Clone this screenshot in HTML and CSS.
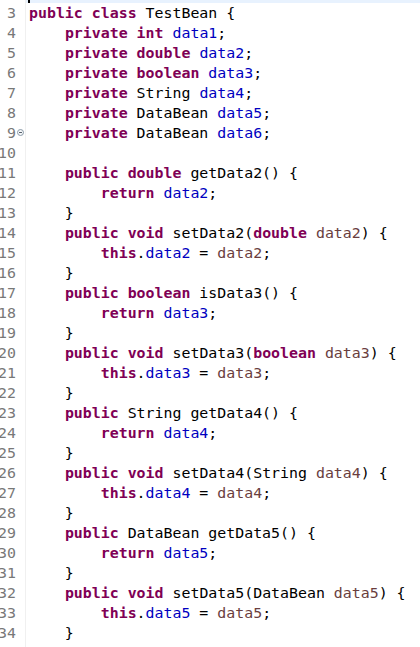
FILE: index.html
```html
<!DOCTYPE html>
<html>
<head>
<meta charset="utf-8">
<link rel="stylesheet" href="styles.css">
</head>
<body>
<div class="editor">
  <div class="line current"><span class="ln">2</span><span class="code"><span class="caret"></span></span></div>
  <div class="line"><span class="ln">3</span><span class="code"><b class="k">public</b> <b class="k">class</b> TestBean {</span></div>
  <div class="line"><span class="ln">4</span><span class="code">    <b class="k">private</b> <b class="k">int</b> <span class="f">data1</span>;</span></div>
  <div class="line"><span class="ln">5</span><span class="code">    <b class="k">private</b> <b class="k">double</b> <span class="f">data2</span>;</span></div>
  <div class="line"><span class="ln">6</span><span class="code">    <b class="k">private</b> <b class="k">boolean</b> <span class="f">data3</span>;</span></div>
  <div class="line"><span class="ln">7</span><span class="code">    <b class="k">private</b> String <span class="f">data4</span>;</span></div>
  <div class="line"><span class="ln">8</span><span class="code">    <b class="k">private</b> DataBean <span class="f">data5</span>;</span></div>
  <div class="line"><span class="ln">9<span class="fold"></span></span><span class="code">    <b class="k">private</b> DataBean <span class="f">data6</span>;</span></div>
  <div class="line"><span class="ln">10</span><span class="code"></span></div>
  <div class="line"><span class="ln">11</span><span class="code">    <b class="k">public</b> <b class="k">double</b> getData2() {</span></div>
  <div class="line"><span class="ln">12</span><span class="code">        <b class="k">return</b> <span class="f">data2</span>;</span></div>
  <div class="line"><span class="ln">13</span><span class="code">    }</span></div>
  <div class="line"><span class="ln">14</span><span class="code">    <b class="k">public</b> <b class="k">void</b> setData2(<b class="k">double</b> <span class="p">data2</span>) {</span></div>
  <div class="line"><span class="ln">15</span><span class="code">        <b class="k">this</b>.<span class="f">data2</span> = <span class="p">data2</span>;</span></div>
  <div class="line"><span class="ln">16</span><span class="code">    }</span></div>
  <div class="line"><span class="ln">17</span><span class="code">    <b class="k">public</b> <b class="k">boolean</b> isData3() {</span></div>
  <div class="line"><span class="ln">18</span><span class="code">        <b class="k">return</b> <span class="f">data3</span>;</span></div>
  <div class="line"><span class="ln">19</span><span class="code">    }</span></div>
  <div class="line"><span class="ln">20</span><span class="code">    <b class="k">public</b> <b class="k">void</b> setData3(<b class="k">boolean</b> <span class="p">data3</span>) {</span></div>
  <div class="line"><span class="ln">21</span><span class="code">        <b class="k">this</b>.<span class="f">data3</span> = <span class="p">data3</span>;</span></div>
  <div class="line"><span class="ln">22</span><span class="code">    }</span></div>
  <div class="line"><span class="ln">23</span><span class="code">    <b class="k">public</b> String getData4() {</span></div>
  <div class="line"><span class="ln">24</span><span class="code">        <b class="k">return</b> <span class="f">data4</span>;</span></div>
  <div class="line"><span class="ln">25</span><span class="code">    }</span></div>
  <div class="line"><span class="ln">26</span><span class="code">    <b class="k">public</b> <b class="k">void</b> setData4(String <span class="p">data4</span>) {</span></div>
  <div class="line"><span class="ln">27</span><span class="code">        <b class="k">this</b>.<span class="f">data4</span> = <span class="p">data4</span>;</span></div>
  <div class="line"><span class="ln">28</span><span class="code">    }</span></div>
  <div class="line"><span class="ln">29</span><span class="code">    <b class="k">public</b> DataBean getData5() {</span></div>
  <div class="line"><span class="ln">30</span><span class="code">        <b class="k">return</b> <span class="f">data5</span>;</span></div>
  <div class="line"><span class="ln">31</span><span class="code">    }</span></div>
  <div class="line"><span class="ln">32</span><span class="code">    <b class="k">public</b> <b class="k">void</b> setData5(DataBean <span class="p">data5</span>) {</span></div>
  <div class="line"><span class="ln">33</span><span class="code">        <b class="k">this</b>.<span class="f">data5</span> = <span class="p">data5</span>;</span></div>
  <div class="line"><span class="ln">34</span><span class="code">    }</span></div>
  <div class="line"><span class="ln">35</span><span class="code"></span></div>
</div>
</body>
</html>
```
FILE: styles.css
```css
html, body {
  margin: 0;
  padding: 0;
  background: #ffffff;
  overflow: hidden;
}
.editor {
  margin-top: -17px;
  font-family: "DejaVu Sans Mono", "Liberation Mono", monospace;
  font-size: 14.9px;
  line-height: 20px;
  color: #000000;
}
.line {
  display: grid;
  grid-template-columns: 26px 1fr;
  height: 20px;
}
.ln {
  position: relative;
  text-align: right;
  padding-right: 9px;
  color: #787878;
  border-right: 1px solid #f0f0f0;
  white-space: nowrap;
  overflow: visible;
  direction: rtl;
}
.code {
  white-space: pre;
  padding-left: 3px;
}
.current .code {
  background: #e8f2fe;
}
.caret {
  display: inline-block;
  width: 2px;
  height: 20px;
  margin-left: -1px;
  background: #000;
  vertical-align: top;
}
.k {
  color: #7f0055;
  font-weight: bold;
}
.f {
  color: #0000c0;
}
.p {
  color: #6a3e3e;
}
.fold {
  position: absolute;
  left: 17px;
  top: 6px;
  width: 7px;
  height: 7px;
  border: 1px solid #8a9aa8;
  border-radius: 50%;
  box-sizing: border-box;
  background: #f4f6f8;
}
.fold::after {
  content: "";
  position: absolute;
  left: 1px;
  top: 2px;
  width: 3px;
  height: 1px;
  background: #55606a;
}
```
